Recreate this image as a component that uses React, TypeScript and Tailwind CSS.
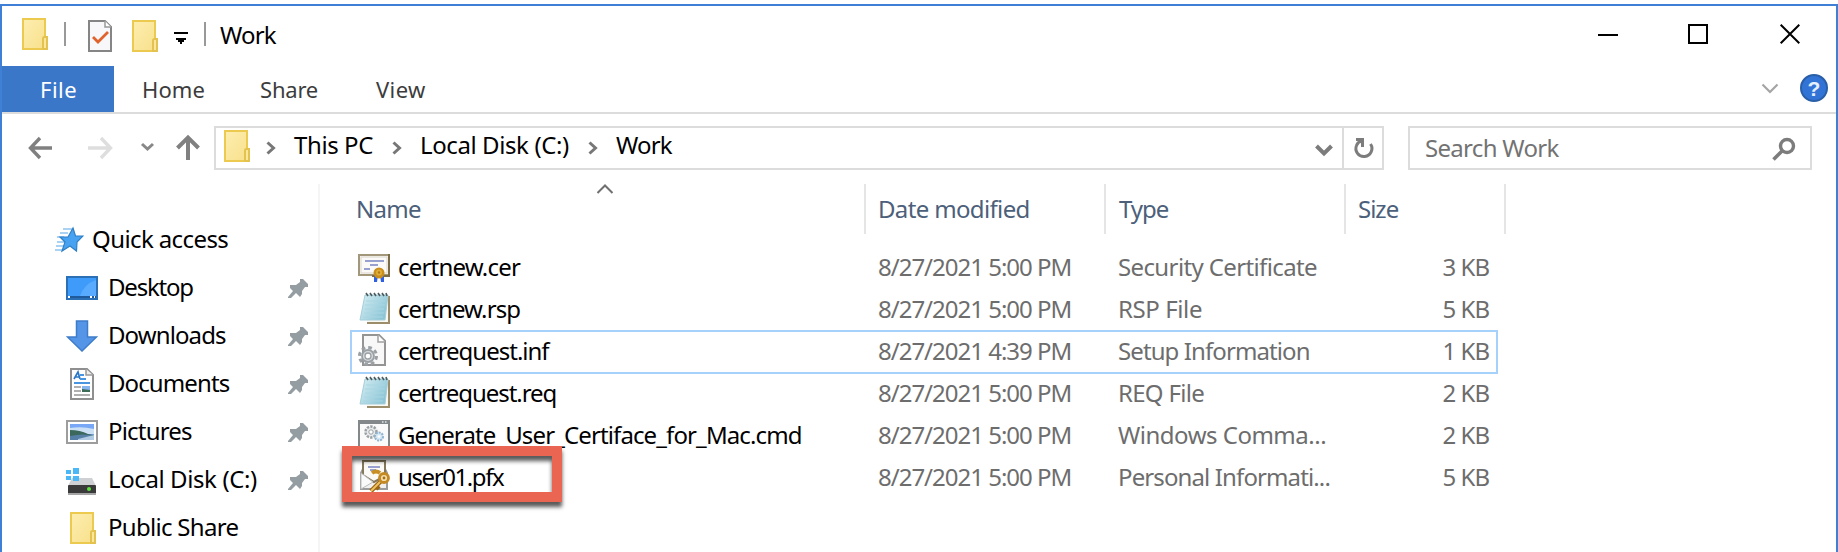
import type { ReactNode } from 'react';

const Box = ({ children, className = '' }: { children: ReactNode; className?: string }) => (
  <svg width="32" height="32" viewBox="0 0 32 32" className={'shrink-0 ' + className}>{children}</svg>
);

const Folder = ({ className = '' }: { className?: string }) => (
  <svg width="26" height="32" viewBox="0 0 26 32" className={'shrink-0 ' + className}>
    <defs>
      <linearGradient id="fg" x1="0" y1="0" x2="1" y2="1">
        <stop offset="0" stopColor="#fdeeb0" />
        <stop offset="1" stopColor="#f8e08a" />
      </linearGradient>
    </defs>
    <path d="M1 1H23V19H25V31H1Z" fill="url(#fg)" stroke="#ecc94f" strokeWidth="2" />
    <path d="M21 31V20.500Q21 19 22.500 19H25V31Z" fill="#fbe79c" stroke="#e3c250" strokeWidth="2" />
  </svg>
);

const Chevron = () => (
  <svg width="10" height="14" viewBox="0 0 10 14" className="mt-[13px] shrink-0">
    <path d="M1.500 1.500L7.500 7L1.500 12.500" fill="none" stroke="#777" strokeWidth="3" />
  </svg>
);

const Pin = () => (
  <svg width="22" height="22" viewBox="0 0 22 22" className="mt-[3px] shrink-0">
    <path d="M13 1h3l5 5v3h-3l-3 4v3l-2 3-4-4-5 5H1v-1l5-6-3-3V7h6l4-3Z" fill="#949da1" />
  </svg>
);

const Cert = () => (
  <Box>
    <rect x="1" y="5" width="30" height="20" fill="#fbfaf8" stroke="#a3977b" strokeWidth="2" />
    <path d="M31 4V26H14" fill="none" stroke="#7c6c45" strokeWidth="2" />
    <rect x="3" y="7" width="26" height="16" fill="none" stroke="#dcd6ca" strokeWidth="1" />
    <path d="M7 11H26M12 15H20M6 19H12" stroke="#97a0cf" strokeWidth="2" />
    <path d="M16 25H20L19 32H16ZM22 25H26V32H23Z" fill="#2f60e4" />
    <circle cx="21" cy="23" r="5.500" fill="#c98e1c" />
    <circle cx="21" cy="22.500" r="3" fill="#e0ad3c" />
    <circle cx="21" cy="22.500" r="1.200" fill="#b27a12" />
  </Box>
);

const Notepad = () => (
  <Box>
    <defs>
      <linearGradient id="np" x1="0" y1="0" x2="1" y2="0.600">
        <stop offset="0" stopColor="#d8eff4" />
        <stop offset="1" stopColor="#8cc5d6" />
      </linearGradient>
    </defs>
    <path d="M26 4H31V31H9V27Z" fill="#faf8f3" />
    <path d="M31 4V31H9" fill="none" stroke="#9d8e6b" strokeWidth="2" />
    <path d="M7 3H30L27 28H2Z" fill="url(#np)" stroke="#a5cfdb" strokeWidth="1" />
    <path d="M8 9H27M7 13H27M7 17H26M6 21H26M5 25H25" stroke="#a8d6e2" strokeWidth="1" />
    <path d="M8 1l2 3M12 1l2 3M16 1l2 3M20 1l2 3M24 1l2 3M28 1l1 3" stroke="#4d5a5e" strokeWidth="1.600" />
  </Box>
);

const Setup = () => (
  <Box>
    <path d="M5 1H21L27 7V31H5Z" fill="#f8f8f9" stroke="#949494" strokeWidth="2" />
    <path d="M20 1V8H27" fill="#fff" stroke="#a0a0a0" strokeWidth="1.500" />
    <circle cx="10" cy="22" r="8.500" fill="none" stroke="#9aa0a4" strokeWidth="3" strokeDasharray="3.700 2.970" />
    <circle cx="10" cy="22" r="6" fill="#d5d9dc" stroke="#9aa0a4" strokeWidth="1.800" />
    <circle cx="10" cy="22" r="3" fill="#fff" stroke="#9aa0a4" strokeWidth="1.300" />
  </Box>
);

const Command = () => (
  <Box>
    <rect x="1" y="3" width="30" height="26" fill="#fafafa" stroke="#83898b" strokeWidth="2" />
    <path d="M0 4H32" stroke="#83898b" strokeWidth="4" />
    <path d="M24 4h1.500M27 4h1.500" stroke="#dfe3e4" strokeWidth="1.500" />
    <circle cx="13" cy="14" r="5.500" fill="#e8eaeb" stroke="#9aa0a3" strokeWidth="2.500" strokeDasharray="2.300 1.200" />
    <circle cx="13" cy="14" r="2.200" fill="#fff" stroke="#9aa0a3" />
    <circle cx="21" cy="18.500" r="4" fill="#d7e9f7" stroke="#92b4cf" strokeWidth="2" strokeDasharray="2 1" />
    <circle cx="21" cy="18.500" r="1.300" fill="#fff" />
  </Box>
);

const Pfx = () => (
  <Box>
    <path d="M3 13V29H29V13L27 9H5Z" fill="#f0f0f0" stroke="#9b9b9b" strokeWidth="2" />
    <path d="M5 1H27V16L16 22L5 15Z" fill="#fbfaf7" stroke="#85775a" strokeWidth="2" />
    <path d="M10 7H22M12 10H18" stroke="#97a0cf" strokeWidth="1.800" />
    <path d="M3 13L15 22L3 29Z" fill="#fafafa" stroke="#bcbcbc" />
    <path d="M23 21L13 31M18 26L21 29" stroke="#9c6512" strokeWidth="4.500" />
    <path d="M23 21L13 31" stroke="#efc25d" strokeWidth="2" />
    <path d="M14 13Q18 10 22 13" fill="none" stroke="#c78f24" strokeWidth="4" />
    <circle cx="26" cy="18" r="4.500" fill="#f5dfae" stroke="#c48923" strokeWidth="2.800" />
    <circle cx="26" cy="18" r="1.400" fill="#a5701a" />
  </Box>
);

const Desktop = () => (
  <Box className="mt-[2px]">
    <rect x="1" y="5" width="30" height="22" fill="#3e9bfa" stroke="#2b6fb5" strokeWidth="2" />
    <path d="M14 24Q18 12 30 8V24Z" fill="#58abff" />
    <path d="M2 25H30" stroke="#1e5a9c" strokeWidth="2" />
    <path d="M2 25H4M24 25H26M28 25H29" stroke="#fff" strokeWidth="2" />
  </Box>
);

const Downloads = () => (
  <Box className="mt-[2px]">
    <path d="M10.500 1H21.500V17H30.500L16 31L1.500 17H10.500Z" fill="#5595e8" stroke="#3e7cc9" strokeWidth="1.500" />
  </Box>
);

const Documents = () => (
  <Box className="mt-[2px]">
    <path d="M5 1H21L27 7V31H5Z" fill="#fff" stroke="#8f8f8f" strokeWidth="2" />
    <path d="M20 1V7H27" fill="#eee" stroke="#999" strokeWidth="1.500" />
    <path d="M8 11L12 4L14 11M9.500 9H14" fill="none" stroke="#2d79c8" strokeWidth="1.700" />
    <path d="M14 7H18M14 11H20M8 15H24" stroke="#4a95e0" strokeWidth="2" />
    <path d="M8 19H15M8 23H15M8 27H24" stroke="#b0b0b0" strokeWidth="2" />
    <rect x="16" y="18" width="8" height="6" fill="#86b4ef" />
    <path d="M16 21L24 22V24H16Z" fill="#3c6b58" />
  </Box>
);

const Pictures = () => (
  <Box className="mt-[2px]">
    <rect x="1" y="5" width="30" height="22" fill="#fff" stroke="#9d9d9d" strokeWidth="2" />
    <rect x="4" y="8" width="24" height="16" fill="#78a8f5" />
    <path d="M4 12Q16 10 28 13V18H4Z" fill="#cbe0f5" />
    <path d="M4 14Q14 14 22 18L28 19V21H4Z" fill="#3a685c" />
    <path d="M4 20Q18 17 28 20V24H4Z" fill="#557fa6" />
    <path d="M12 23L28 19V24H12Z" fill="#b0cbe3" />
  </Box>
);

const Disk = () => (
  <Box className="mt-[2px]">
    <path d="M6 14H26L30 22H2Z" fill="#cfd0d3" />
    <path d="M0 6h5v4H0zM7 4h6v6H7zM0 12h5v4H0zM7 12h6v5H7z" fill="#4ab8f6" />
    <rect x="2" y="21" width="28" height="9" rx="1" fill="#3a3a3a" />
    <path d="M2 30H30" stroke="#a5a5a5" strokeWidth="2" />
    <circle cx="23" cy="25" r="2" fill="#5ce23c" />
  </Box>
);

const places = [
  { name: 'Desktop', icon: <Desktop />, track: 'tracking-[-1.2px]', pin: true },
  { name: 'Downloads', icon: <Downloads />, track: 'tracking-[-0.9px]', pin: true },
  { name: 'Documents', icon: <Documents />, track: 'tracking-[-0.9px]', pin: true },
  { name: 'Pictures', icon: <Pictures />, track: 'tracking-[-0.8px]', pin: true },
  { name: 'Local Disk (C:)', icon: <Disk />, track: 'tracking-[-0.4px]', pin: true },
  { name: 'Public Share', icon: <Folder className="mt-[2px] mr-[2px] ml-[4px]" />, track: 'tracking-[-0.7px]', pin: false },
];

const files = [
  { name: 'certnew.cer', nt: 'tracking-[-0.8px]', icon: <Cert />, date: '8/27/2021 5:00 PM', type: 'Security Certificate', tt: 'tracking-[-0.62px]', size: '3 KB' },
  { name: 'certnew.rsp', nt: 'tracking-[-0.9px]', icon: <Notepad />, date: '8/27/2021 5:00 PM', type: 'RSP File', tt: 'tracking-[-0.4px]', size: '5 KB' },
  { name: 'certrequest.inf', nt: 'tracking-[-1px]', icon: <Setup />, date: '8/27/2021 4:39 PM', type: 'Setup Information', tt: 'tracking-[-0.9px]', size: '1 KB', focused: true },
  { name: 'certrequest.req', nt: 'tracking-[-1.05px]', icon: <Notepad />, date: '8/27/2021 5:00 PM', type: 'REQ File', tt: 'tracking-[-0.7px]', size: '2 KB' },
  { name: 'Generate_User_Certiface_for_Mac.cmd', nt: 'tracking-[-0.88px]', icon: <Command />, date: '8/27/2021 5:00 PM', type: 'Windows Comma...', tt: 'tracking-[-0.5px]', size: '2 KB' },
  { name: 'user01.pfx', nt: 'tracking-[-1.4px]', icon: <Pfx />, date: '8/27/2021 5:00 PM', type: 'Personal Informati...', tt: 'tracking-[-0.88px]', size: '5 KB', marked: true },
];

function TitleBar() {
  return (
    <div className="flex h-[60px] items-start">
      <Folder className="mt-[12px] ml-[20px]" />
      <div className="mt-[16px] ml-[16px] h-[24px] w-[2px] bg-[#999]" />
      <svg width="24" height="32" viewBox="0 0 24 32" className="mt-[14px] ml-[22px]">
        <path d="M1 1H17L23 7V31H1Z" fill="#f8f8fa" stroke="#858585" strokeWidth="2" />
        <path d="M17 1V7H23" fill="#fff" stroke="#999" strokeWidth="1.500" />
        <path d="M5 17L10 22L20 12" fill="none" stroke="#e0622c" strokeWidth="2.800" />
      </svg>
      <Folder className="mt-[14px] ml-[20px]" />
      <svg width="14" height="12" viewBox="0 0 14 12" className="mt-[26px] ml-[16px]">
        <path d="M0 0H14V2H0ZM2 6H12V8H10V10H8V12H6V10H4V8H2Z" fill="#000" />
      </svg>
      <div className="mt-[16px] ml-[16px] h-[24px] w-[2px] bg-[#999]" />
      <div className="mt-[13px] ml-[14px] grow leading-[32px] tracking-[-0.8px]">Work</div>
      <svg width="202" height="22" viewBox="0 0 202 22" className="mt-[18px] mr-[36px]">
        <path d="M0 11H20" stroke="#000" strokeWidth="2" />
        <rect x="91" y="1" width="18" height="18" fill="none" stroke="#000" strokeWidth="2" />
        <path d="M182.700 0.700L201.300 19.300M201.300 0.700L182.700 19.300" stroke="#000" strokeWidth="2" />
      </svg>
    </div>
  );
}

function Ribbon() {
  return (
    <div className="flex h-[48px] items-start border-b-2 border-[#dcdcdc] text-[22px] leading-[46px] text-[#3c3c3c]">
      <div className="h-[46px] w-[112px] bg-[#3b77c8] pl-[38px] tracking-[0.5px] text-white">File</div>
      <div className="ml-[28px] w-[118px] tracking-[0.1px]">Home</div>
      <div className="w-[116px] tracking-[-0.2px]">Share</div>
      <div className="grow tracking-[0.4px]">View</div>
      <svg width="18" height="12" viewBox="0 0 18 12" className="mt-[17px] mr-[21px]">
        <path d="M1.500 1.500L9 9L16.500 1.500" fill="none" stroke="#a5a5a5" strokeWidth="2.200" />
      </svg>
      <div className="mt-[8px] mr-[8px] size-[28px] rounded-full border-2 border-[#2a5fa8] bg-[#3273d6] text-center font-['Liberation_Sans'] text-[21px] leading-[25px] font-bold text-[#e4efff]">?</div>
    </div>
  );
}

function AddressBar() {
  return (
    <div className="flex h-[70px] items-start pt-[12px]">
      <svg width="174" height="30" viewBox="0 0 174 30" fill="none" className="mt-[7px] ml-[26px]" strokeWidth="3.400">
        <path d="M3 15H24M12 5L2.500 15L12 25" stroke="#808080" />
        <path d="M60 15H82M73 5L82.500 15L73 25" stroke="#dedede" />
        <path d="M114 11L119.500 16L125 11" stroke="#888" strokeWidth="3" />
        <path d="M160 27V5" stroke="#808080" strokeWidth="4" />
        <path d="M149.500 15L160 4.500L170.500 15" stroke="#808080" strokeWidth="4" />
      </svg>
      <div className="ml-[12px] flex h-[44px] w-[1170px] items-start border-2 border-[#dcdcdc]">
        <Folder className="mt-[2px] ml-[8px]" />
        <div className="ml-[16px] flex"><Chevron /></div>
        <div className="ml-[18px] w-[98px] leading-[34px] tracking-[-0.4px]">This PC</div>
        <Chevron />
        <div className="ml-[18px] w-[168px] leading-[34px] tracking-[-0.4px]">Local Disk (C:)</div>
        <Chevron />
        <div className="ml-[18px] grow leading-[34px] tracking-[-0.8px]">Work</div>
        <svg width="18" height="14" viewBox="0 0 18 14" className="mt-[16px] mr-[9px]">
          <path d="M1.500 2L9 9.500L16.500 2" fill="none" stroke="#7c7c7c" strokeWidth="4" />
        </svg>
        <div className="h-full w-[40px] border-l-2 border-[#dcdcdc] pt-[9px] pl-[9px]">
          <svg width="22" height="24" viewBox="0 0 22 24">
            <path d="M17.500 7A8 8 0 1 1 3.500 8.500Q5 4.500 9 4" fill="none" stroke="#7c7c7c" strokeWidth="3" />
            <path d="M3 2.500H9.500V10" fill="none" stroke="#7c7c7c" strokeWidth="3" />
          </svg>
        </div>
      </div>
      <div className="ml-[24px] flex h-[44px] w-[404px] items-start border-2 border-[#dcdcdc] text-[#737373]">
        <div className="ml-[15px] grow leading-[39px] tracking-[-0.7px]">Search Work</div>
        <svg width="24" height="24" viewBox="0 0 24 24" className="mt-[9px] mr-[14px]">
          <circle cx="15" cy="9" r="6.500" fill="none" stroke="#7c7c7c" strokeWidth="3.400" />
          <path d="M10.500 13.500L1.500 22.500" stroke="#7c7c7c" strokeWidth="3.600" />
        </svg>
      </div>
    </div>
  );
}

function Sidebar() {
  return (
    <div className="flex h-[368px] w-[318px] shrink-0 flex-col overflow-hidden border-r-2 border-[#f5f5f5] pt-[31px]">
      <div className="flex h-[48px] shrink-0 items-center">
        <Box className="mt-[2px] ml-[50px]">
          <path d="M11 5H20M8 9H16M5 13H12M5 18H13M4 22H12M3 26H10" stroke="#8fc3ee" strokeWidth="1.500" />
          <path d="M21 4L23.500 12H31L25 18L24.500 27L18 22L10 27L13 18L8 13H16Z" fill="#48a2f2" stroke="#2f7fc5" strokeWidth="1.200" />
        </Box>
        <span className="ml-[8px] tracking-[-0.6px]">Quick access</span>
      </div>
      {places.map((p) => (
        <div key={p.name} className="flex h-[48px] shrink-0 items-center pr-[9px] pl-[64px]">
          {p.icon}
          <span className={'ml-[10px] grow ' + p.track}>{p.name}</span>
          {p.pin && <Pin />}
        </div>
      ))}
    </div>
  );
}

function FileList() {
  return (
    <div className="flex grow flex-col pl-[30px]">
      <div className="flex h-[62px] items-start leading-[50px] text-[#4c607a]">
        <div className="relative h-[50px] w-[516px] border-r-2 border-[#e5e5e5] pl-[6px] tracking-[-0.7px]">
          Name
          <svg width="18" height="12" viewBox="0 0 18 12" className="absolute -top-px left-[246px]">
            <path d="M1.500 10L9 2.500L16.500 10" fill="none" stroke="#707070" strokeWidth="2" />
          </svg>
        </div>
        <div className="h-[50px] w-[240px] border-r-2 border-[#e5e5e5] pl-[12px] tracking-[-0.65px]">Date modified</div>
        <div className="h-[50px] w-[240px] border-r-2 border-[#e5e5e5] pl-[13px] tracking-[-1px]">Type</div>
        <div className="h-[50px] w-[160px] border-r-2 border-[#e5e5e5] pl-[12px] tracking-[-1px]">Size</div>
      </div>
      {files.map((f) => (
        <div key={f.name} className="relative flex h-[42px] w-[1148px] items-center pl-[8px] text-[#6d6d6d]">
          {f.focused && <div className="absolute top-0 left-0 h-[44px] w-full border-2 border-[#a6d1fb]" />}
          <div className="flex w-[520px] items-center">
            <div className="-mt-[2px]">{f.icon}</div>
            <span className={'ml-[8px] text-black ' + f.nt}>{f.name}</span>
          </div>
          <div className="w-[240px] tracking-[-1px]">{f.date}</div>
          <div className={'grow ' + f.tt}>{f.type}</div>
          <div className="pr-[9px] tracking-[-1px]">{f.size}</div>
          {f.marked && (
            <div className="absolute -top-[10px] -left-[8px] h-[56px] w-[220px] border-[10px] border-[#ea6652] shadow-[0_5px_4px_rgba(0,0,0,0.65),inset_0_5px_4px_rgba(0,0,0,0.65)]" />
          )}
        </div>
      ))}
    </div>
  );
}

export default function App() {
  return (
    <div className="h-[552px] w-[1838px] overflow-hidden bg-white pt-[4px] font-['Noto_Sans',sans-serif] text-[24px] whitespace-nowrap text-black">
      <div className="h-[548px] border-x-2 border-t-2 border-[#3f7fd6]">
        <TitleBar />
        <Ribbon />
        <AddressBar />
        <div className="flex">
          <Sidebar />
          <FileList />
        </div>
      </div>
    </div>
  );
}
